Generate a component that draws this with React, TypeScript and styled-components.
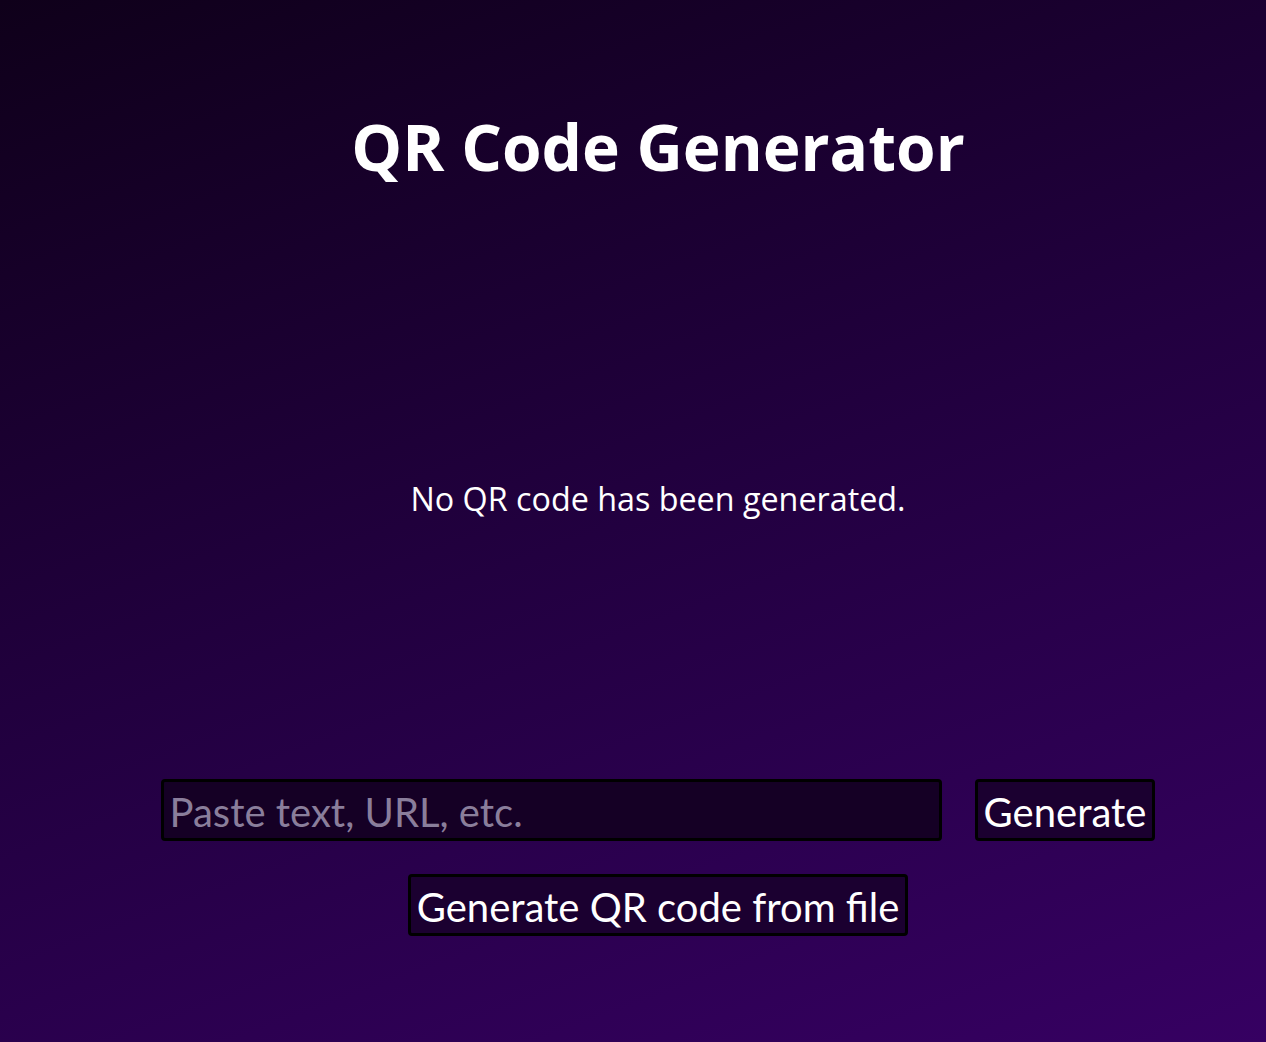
import { useState } from "react";
import styled, { createGlobalStyle } from "styled-components";

const GlobalStyle = createGlobalStyle`
  html, body {
    margin: 0;
    padding: 0;
  }
  body {
    min-height: 100vh;
    background: linear-gradient(160deg, #0f001a 0%, #220040 50%, #360062 100%);
    font-family: "Open Sans", "Noto Sans", sans-serif;
    color: #ffffff;
  }
`;

const Page = styled.main`
  min-height: 1042px;
  box-sizing: border-box;
  padding: 109px 0 0 50px;
  display: flex;
  flex-direction: column;
  align-items: center;
`;

const Title = styled.h1`
  margin: 0;
  font-size: 64px;
  font-weight: 700;
  line-height: 76px;
`;

const Placeholder = styled.p`
  margin: 291px 0 0;
  font-size: 32.3px;
  line-height: 44px;
`;

const Row = styled.div`
  margin-top: 259px;
  display: flex;
  gap: 33px;
`;

const controlFont = `
  font-family: Lato, "Noto Sans", sans-serif;
  font-size: 40px;
  color: #ffffff;
  border: 3px solid #000000;
  border-radius: 4px;
  box-sizing: border-box;
  height: 62px;
  padding: 3px 6px 0;
`;

const TextInput = styled.input`
  ${controlFont}
  width: 781px;
  background: #150025;
  outline: none;

  &::placeholder {
    color: #8a7e9b;
  }
`;

const Button = styled.button`
  ${controlFont}
  background: #1b0030;
  cursor: pointer;
  white-space: nowrap;
`;

const FileRow = styled.div`
  margin-top: 33px;
`;

export default function App() {
  const [text, setText] = useState("");
  return (
    <>
      <GlobalStyle />
      <Page>
        <Title>QR Code Generator</Title>
        <Placeholder>No QR code has been generated.</Placeholder>
        <Row>
          <TextInput
            value={text}
            onChange={(e) => setText(e.target.value)}
            placeholder="Paste text, URL, etc."
          />
          <Button>Generate</Button>
        </Row>
        <FileRow>
          <Button>Generate QR code from file</Button>
        </FileRow>
      </Page>
    </>
  );
}
